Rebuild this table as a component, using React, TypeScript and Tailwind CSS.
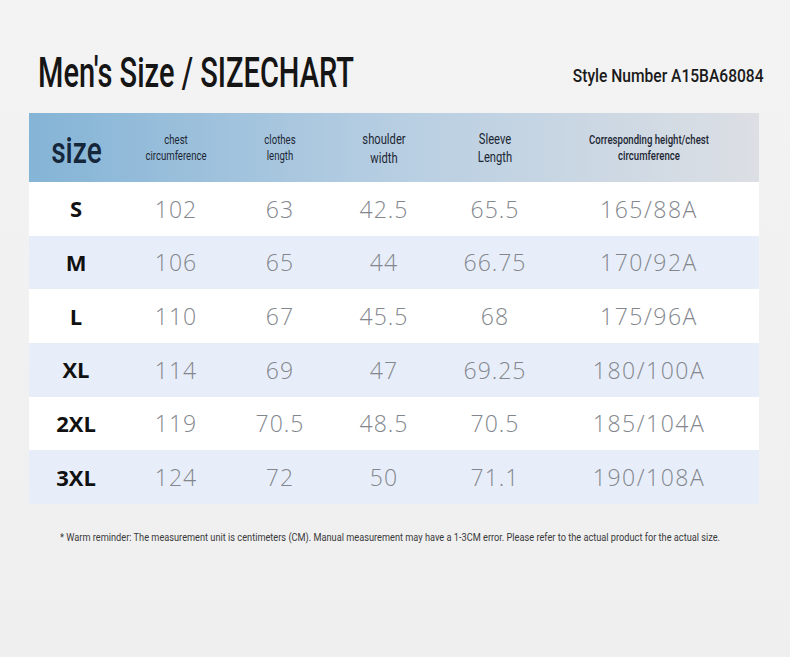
import React from "react";

type Row = {
    size: string;
    chest: string;
    length: string;
    shoulder: string;
    sleeve: string;
    fit: string;
    tinted: boolean;
};

const rows: Row[] = [
    { size: "S", chest: "102", length: "63", shoulder: "42.5", sleeve: "65.5", fit: "165/88A", tinted: false },
    { size: "M", chest: "106", length: "65", shoulder: "44", sleeve: "66.75", fit: "170/92A", tinted: true },
    { size: "L", chest: "110", length: "67", shoulder: "45.5", sleeve: "68", fit: "175/96A", tinted: false },
    { size: "XL", chest: "114", length: "69", shoulder: "47", sleeve: "69.25", fit: "180/100A", tinted: true },
    { size: "2XL", chest: "119", length: "70.5", shoulder: "48.5", sleeve: "70.5", fit: "185/104A", tinted: false },
    { size: "3XL", chest: "124", length: "72", shoulder: "50", sleeve: "71.1", fit: "190/108A", tinted: true },
];

const cond = "font-['Roboto','Liberation_Sans',sans-serif]";
const num = "font-['Open_Sans','Noto_Sans',sans-serif]";

const App: React.FC = () => {
    return (
        <div className="w-[790px] h-[657px] bg-gradient-to-b from-[#f3f3f4] to-[#efeff0] overflow-hidden">
            <div className="flex items-end justify-between pl-[38px] pr-[26px] pt-[50px]">
                <h1 className={`${cond} text-[43px] leading-[44px] font-medium text-[#151515] whitespace-nowrap scale-x-[0.675] origin-left`}>
                    Men's Size / SIZECHART
                </h1>
                <span className={`${cond} text-[19px] font-medium text-[#1a1a1a] mb-[4px] whitespace-nowrap scale-x-[0.82] origin-right`}>
                    Style Number A15BA68084
                </span>
            </div>

            <div className="ml-[29px] mt-[19px] w-[730px]">
                <div className="flex h-[69px] items-center bg-gradient-to-r from-[#84b4d6] via-[#b7cee2] to-[#dcdfe4] text-[#1d2733]">
                    <div className="w-[94px] flex justify-center pt-[6px]">
                        <span className={`${cond} text-[36px] font-medium text-[#15263a] scale-x-[0.78]`}>size</span>
                    </div>
                    <div className={`${cond} w-[106px] text-center text-[12px] leading-[16px] scale-x-[0.8]`}>
                        chest<br />circumference
                    </div>
                    <div className={`${cond} w-[102px] text-center text-[12px] leading-[16px] scale-x-[0.8]`}>
                        clothes<br />length
                    </div>
                    <div className={`${cond} w-[106px] text-center text-[14px] leading-[19px] scale-x-[0.8] pt-[2px]`}>
                        shoulder<br />width
                    </div>
                    <div className={`${cond} w-[116px] text-center text-[14px] leading-[18px] scale-x-[0.8]`}>
                        Sleeve<br />Length
                    </div>
                    <div className={`${cond} w-[192px] text-center text-[12px] leading-[16px] font-medium scale-x-[0.8]`}>
                        Corresponding height/chest<br />circumference
                    </div>
                </div>

                {rows.map((r) => (
                    <div
                        key={r.size}
                        className={`flex h-[53.7px] items-center ${r.tinted ? "bg-[#e8eef9]" : "bg-white"}`}
                    >
                        <div className={`${num} w-[94px] text-center text-[22px] font-bold text-[#111]`}>{r.size}</div>
                        <div className={`${num} w-[106px] text-center text-[23px] font-light tracking-[1px] text-[#83878d]`}>{r.chest}</div>
                        <div className={`${num} w-[102px] text-center text-[23px] font-light tracking-[1px] text-[#83878d]`}>{r.length}</div>
                        <div className={`${num} w-[106px] text-center text-[23px] font-light tracking-[1px] text-[#83878d]`}>{r.shoulder}</div>
                        <div className={`${num} w-[116px] text-center text-[23px] font-light tracking-[1px] text-[#83878d]`}>{r.sleeve}</div>
                        <div className={`${num} w-[192px] text-center text-[23px] font-light tracking-[1.5px] text-[#83878d]`}>{r.fit}</div>
                    </div>
                ))}
            </div>

            <p className={`${cond} mt-[26px] ml-[60px] text-[11px] text-[#3a3a3a] scale-x-[0.837] origin-left whitespace-nowrap`}>
                * Warm reminder: The measurement unit is centimeters (CM). Manual measurement may have a 1-3CM error. Please refer to the actual product for the actual size.
            </p>
        </div>
    );
};

export default App;
